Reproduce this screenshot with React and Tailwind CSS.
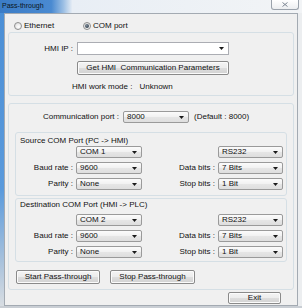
import React from "react";

function Arrow() {
  return (
    <svg width="5" height="3" viewBox="0 0 5 3" className="shrink-0">
      <path d="M0 0H5L2.5 3Z" fill="#1a1a1a" />
    </svg>
  );
}

function Sel({ w, v }) {
  return (
    <div
      className={`${w} h-[12px] flex items-center pl-[3px] pr-[4px] border border-[#9a9a9a] rounded-[2px] bg-[linear-gradient(#fbfbfb,#f1f1f1_50%,#e6e6e6_50%,#dedede)]`}
    >
      <span className="flex-1 leading-[10px]">{v}</span>
      <Arrow />
    </div>
  );
}

function Btn({ w, h, children }) {
  return (
    <div
      className={`${w} ${h} flex items-center justify-center border border-[#8a8a8a] rounded-[2px] bg-[linear-gradient(#f4f4f4,#ececec_50%,#dedede_50%,#d2d2d2)] shadow-[inset_0_0_0_1px_#fbfbfb]`}
    >
      {children}
    </div>
  );
}

function Radio({ checked }) {
  return (
    <div className="w-[8px] h-[8px] rounded-full border border-[#8e8f8f] bg-[radial-gradient(circle_at_60%_65%,#ffffff,#d8d8d8)] flex items-center justify-center">
      {checked && (
        <div className="w-[4px] h-[4px] rounded-full bg-[radial-gradient(circle_at_40%_35%,#7d8b99,#1d2b38)]" />
      )}
    </div>
  );
}

function Row({ l1, v1, l2, v2 }) {
  return (
    <div className="flex items-center h-[12px]">
      <div className="w-[58px] text-right pr-[1px] leading-[10px]">{l1}</div>
      <div className="ml-[2px]">
        <Sel w="w-[66px]" v={v1} />
      </div>
      <div className="w-[74px] text-right pr-[1px] leading-[10px]">{l2}</div>
      <div className="ml-[2px]">
        <Sel w="w-[65px]" v={v2} />
      </div>
    </div>
  );
}

function Group({ title, com, first }) {
  return (
    <div className="mx-[6px] h-[64px] border border-[#d5dfe5] rounded-[3px] flex flex-col">
      <div className={`${first ? "mt-[3px]" : "mt-[1px]"} pl-[4px] h-[10px] leading-[10px]`}>{title}</div>
      <div className={first ? "mt-0" : "mt-[4px]"}>
        <Row l1="" v1={com} l2="" v2="RS232" />
      </div>
      <div className="mt-[4px]">
        <Row l1="Baud rate :" v1="9600" l2="Data bits :" v2="7 Bits" />
      </div>
      <div className="mt-[4px]">
        <Row l1="Parity :" v1="None" l2="Stop bits :" v2="1 Bit" />
      </div>
    </div>
  );
}

export default function App() {
  return (
    <div className="w-[302px] h-[308px] flex flex-col overflow-hidden bg-[#e9ecef] font-['Liberation_Sans',Arial,sans-serif] text-[8px] leading-[10px] text-[#111111]">
      {/* title bar */}
      <div className="h-[13px] shrink-0 flex items-start bg-[linear-gradient(to_right,#3b7cc6_0%,#4a8ad1_17%,#9cbfe4_21%,#e8eef5_24%,#f2f4f6_100%)]">
        <span className="pl-[2px] text-[7px] leading-[12px] text-[#0c1622]">Pass-through</span>
        <div className="ml-auto mr-[3px] w-[28px] h-[10px] border border-t-0 border-[#9aa2ab] rounded-b-[3px] bg-[linear-gradient(#ffffff,#eceef0)] flex items-center justify-center">
          <svg width="6" height="5" viewBox="0 0 6 5">
            <path d="M0.5 0.5L5.5 4.5M5.5 0.5L0.5 4.5" stroke="#7d8894" strokeWidth="1" />
          </svg>
        </div>
      </div>

      {/* body */}
      <div className="flex flex-1">
        <div className="w-[4px] bg-[linear-gradient(to_bottom,#4b8fd6,#5a9adc_60%,#a9c2dc_85%,#d8dde2)]" />
        <div className="w-[294px] border border-[#a3aab2] bg-[#f0f0f0] flex flex-col">
          {/* radios */}
          <div className="mt-[7px] ml-[9px] h-[9px] flex items-center">
            <div className="w-[69px] flex items-center">
              <Radio />
              <span className="ml-[2px]">Ethernet</span>
            </div>
            <div className="flex items-center">
              <Radio checked />
              <span className="ml-[2px]">COM port</span>
            </div>
          </div>

          {/* panel A */}
          <div className="mx-[3px] mt-[2px] h-[64px] border border-[#d5dfe5] rounded-[3px] flex flex-col pt-[9px]">
            <div className="flex items-center h-[13px]">
              <div className="w-[65px] text-right pr-[1px]">HMI IP :</div>
              <div className="ml-[3px] w-[152px] h-[13px] border border-[#abadb3] bg-white flex items-center justify-end pr-[4px]">
                <Arrow />
              </div>
            </div>
            <div className="mt-[6px] ml-[68px]">
              <Btn w="w-[152px]" h="h-[14px]">Get HMI&nbsp; Communication Parameters</Btn>
            </div>
            <div className="mt-[7px] pl-[63px] h-[10px] flex">
              <span>HMI work mode :</span>
              <span className="ml-[7px]">Unknown</span>
            </div>
          </div>

          {/* panel B */}
          <div className="mx-[3px] mt-[7px] h-[187px] border border-[#d5dfe5] rounded-[3px] flex flex-col pt-[7px]">
            <div className="flex items-center h-[12px]">
              <div className="w-[110px] text-right">Communication port :</div>
              <div className="ml-[4px]">
                <Sel w="w-[66px]" v="8000" />
              </div>
              <span className="ml-[5px]">(Default : 8000)</span>
            </div>
            <div className="mt-[9px]">
              <Group title="Source COM Port (PC -> HMI)" com="COM 1" first />
            </div>
            <div className="mt-[2px]">
              <Group title="Destination COM Port (HMI -> PLC)" com="COM 2" />
            </div>
            <div className="mt-[8px] ml-[7px] flex gap-[10px]">
              <Btn w="w-[84px]" h="h-[14px]">Start Pass-through</Btn>
              <Btn w="w-[85px]" h="h-[14px]">Stop Pass-through</Btn>
            </div>
          </div>

          {/* exit */}
          <div className="mt-[2px] self-end mr-[16px]">
            <Btn w="w-[53px]" h="h-[12px]">Exit</Btn>
          </div>
        </div>
        <div className="flex-1 bg-[#eceef0]" />
      </div>
      <div className="h-[2px] shrink-0 bg-[#c9ced4]" />
    </div>
  );
}
